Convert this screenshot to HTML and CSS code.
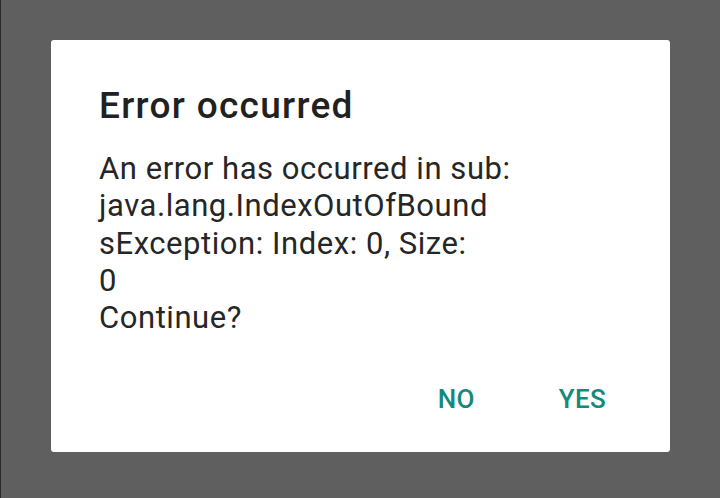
FILE: index.html
```html
<!DOCTYPE html>
<html>
<head>
<meta charset="utf-8">
<link rel="stylesheet" href="styles.css">
</head>
<body>
<div class="screen">
  <div class="dialog">
    <h1 class="title">Error occurred</h1>
    <p class="message">An error has occurred in sub:<br>java.lang.IndexOutOfBound<br>sException: Index: 0, Size:<br>0<br>Continue?</p>
    <div class="actions">
      <span class="btn btn-no">NO</span>
      <span class="btn btn-yes">YES</span>
    </div>
  </div>
</div>
</body>
</html>
```
FILE: styles.css
```css
html, body {
  margin: 0;
  padding: 0;
  background: #5f5f5f;
  width: 720px;
  height: 498px;
  overflow: hidden;
}
.screen {
  width: 720px;
  height: 498px;
  box-sizing: border-box;
  padding: 40px 0 0 51px;
  border-left: 1px solid #2a2a2a;
}
.dialog {
  margin-left: -1px;
  width: 619px;
  height: 412px;
  background: #ffffff;
  border-radius: 3px;
  box-sizing: border-box;
  padding: 45px 0 0 48px;
  font-family: Roboto, "Noto Sans", sans-serif;
  display: flex;
  flex-direction: column;
}
.title {
  margin: 0;
  font-size: 37px;
  font-weight: 500;
  line-height: 41px;
  letter-spacing: 1.3px;
  color: #212121;
}
.message {
  margin: 24px 0 0 0;
  font-size: 31px;
  font-weight: 400;
  line-height: 37.3px;
  letter-spacing: 0.55px;
  color: #262626;
}
.actions {
  display: flex;
  justify-content: flex-end;
  gap: 84px;
  padding-right: 64px;
  margin-top: 48px;
}
.btn {
  font-size: 26px;
  font-weight: 500;
  color: #138a7c;
  letter-spacing: 0.3px;
  line-height: 30px;
}
```
